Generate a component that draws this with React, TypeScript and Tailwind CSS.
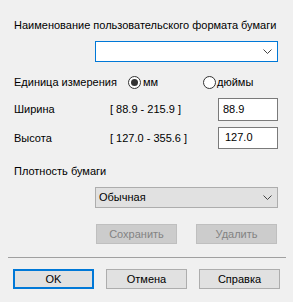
import type { FC } from "react";

const Chevron: FC = () => (
  <svg width="9" height="5" viewBox="0 0 9 5" className="shrink-0">
    <path d="M0.5 0.5 L4.5 4.5 L8.5 0.5" fill="none" stroke="#444" strokeWidth="1" />
  </svg>
);

const Radio: FC<{ checked?: boolean }> = ({ checked }) => (
  <span className="w-[13px] h-[13px] rounded-full border border-[#333] bg-white flex items-center justify-center shrink-0">
    {checked && <span className="w-[7px] h-[7px] rounded-full bg-[#333]" />}
  </span>
);

const App: FC = () => {
  return (
    <div
      className="w-[293px] h-[302px] bg-[#f0f0f0] text-[11px] text-black overflow-hidden flex flex-col whitespace-nowrap"
      style={{ fontFamily: '"Liberation Sans", Arial, sans-serif' }}
    >
      <div className="mt-[17px] h-[16px] leading-[16px] pl-[14px]">Наименование пользовательского формата бумаги</div>

      {/* формат */}
      <div className="mt-[8px] ml-[95px] w-[183px] h-[21px] border border-[#0078d7] bg-white flex items-center justify-end pr-[5px]">
        <Chevron />
      </div>

      {/* единица */}
      <div className="mt-[12px] h-[17px] flex items-center">
        <span className="pl-[14px] w-[128px]">Единица измерения</span>
        <Radio checked />
        <span className="ml-[2px] w-[60px]">мм</span>
        <Radio />
        <span className="ml-[1px]">дюймы</span>
      </div>

      <div className="mt-[7px] h-[23px] flex items-center">
        <span className="pl-[14px] w-[110px]">Ширина</span>
        <span className="w-[108px]">[ 88.9 - 215.9 ]</span>
        <div className="w-[60px] h-[23px] border border-[#7a7a7a] bg-white flex items-center pl-[4px]">88.9</div>
      </div>

      <div className="mt-[6px] h-[22px] flex items-center">
        <span className="pl-[14px] w-[110px]">Высота</span>
        <span className="w-[108px]">[ 127.0 - 355.6 ]</span>
        <div className="w-[60px] h-[22px] border border-[#7a7a7a] bg-white flex items-start pt-[1px] pl-[6px]">127.0</div>
      </div>

      <div className="mt-[14px] h-[16px] leading-[16px] pl-[14px]">Плотность бумаги</div>

      <div className="mt-[8px] ml-[95px] w-[183px] h-[21px] border border-[#adadad] bg-[#e1e1e1] flex items-center justify-between pl-[3px] pr-[5px]">
        <span>Обычная</span>
        <Chevron />
      </div>

      <div className="mt-[16px] h-[20px] flex">
        <button className="ml-[96px] w-[81px] h-[20px] border border-[#bfbfbf] bg-[#cccccc] text-[#838383]">Сохранить</button>
        <button className="ml-[19px] w-[81px] h-[20px] border border-[#bfbfbf] bg-[#cccccc] text-[#838383]">Удалить</button>
      </div>

      <div className="mt-[13px] ml-[8px] w-[278px] h-px bg-[#a0a0a0]" />

      <div className="mt-[11px] h-[20px] flex">
        <button className="ml-[13px] w-[81px] h-[20px] border-2 border-[#0078d7] bg-[#e1e1e1]">OK</button>
        <button className="ml-[12px] w-[81px] h-[20px] border border-[#adadad] bg-[#e1e1e1]">Отмена</button>
        <button className="ml-[12px] w-[81px] h-[20px] border border-[#adadad] bg-[#e1e1e1]">Справка</button>
      </div>
    </div>
  );
};

export default App;
